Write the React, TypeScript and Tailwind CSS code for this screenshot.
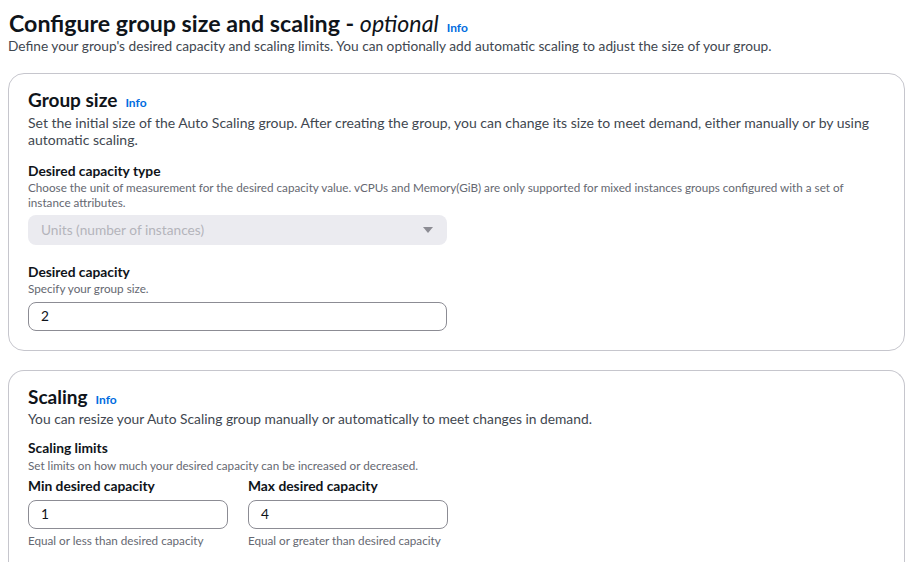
import React from "react";

const font = { fontFamily: 'Lato, "Open Sans", Arial, sans-serif' };

function Info() {
  return <span className="ml-[8px] text-[12px] font-bold leading-none text-[#006ce0]">Info</span>;
}

function TextInput({ value, width }: { value: string; width: string }) {
  return (
    <div
      className={`${width} flex h-[29px] items-center rounded-lg border border-[#8c8c94] bg-white px-[12px] text-[13.7px] text-[#0f141a]`}
    >
      {value}
    </div>
  );
}

export default function App() {
  return (
    <div className="min-h-screen bg-white px-[8px] pt-[9px] pb-6 text-[#0f141a]" style={font}>
      <h1 className="pl-[1px] text-[23.2px] font-bold leading-[28px]">
        Configure group size and scaling - <em className="font-normal italic">optional</em>
        <Info />
      </h1>
      <p className="text-[13.7px] leading-[18px] text-[#414750]">
        Define your group's desired capacity and scaling limits. You can optionally add automatic scaling to adjust the size of your group.
      </p>

      {/* Group size */}
      <section className="mt-[18px] w-[897px] rounded-2xl border border-[#c6c6cd] px-[19px] pt-[14px] pb-[19px]">
        <h2 className="text-[19px] font-bold leading-[24px]">
          Group size
          <Info />
        </h2>
        <p className="mt-[2px] text-[14px] leading-[17px] text-[#414750]">
          Set the initial size of the Auto Scaling group. After creating the group, you can change its size to meet demand, either manually or by using automatic scaling.
        </p>

        <div className="mt-[14px] text-[13.8px] font-bold leading-[18px]">Desired capacity type</div>
        <div className="pr-8 text-[11.7px] leading-[15px] text-[#656871]">
          Choose the unit of measurement for the desired capacity value. vCPUs and Memory(GiB) are only supported for mixed instances groups configured with a set of instance attributes.
        </div>
        <div className="mt-[5px] flex h-[30px] w-[419px] items-center justify-between rounded-lg bg-[#ebebf0] pl-[13px] pr-[14px] text-[13.7px] text-[#b4b4bb]">
          <span>Units (number of instances)</span>
          <svg width="10" height="7" viewBox="0 0 10 7">
            <path d="M0 0 L10 0 L5 6 Z" fill="#8c8c94" />
          </svg>
        </div>

        <div className="mt-[18px] text-[13.8px] font-bold leading-[18px]">Desired capacity</div>
        <div className="text-[11.7px] leading-[15px] text-[#656871]">Specify your group size.</div>
        <div className="mt-[6px]">
          <TextInput value="2" width="w-[419px]" />
        </div>
      </section>

      {/* Scaling */}
      <section className="mt-[19px] w-[897px] rounded-t-2xl border border-b-0 border-[#c6c6cd] px-[19px] pt-[14px] pb-[20px]">
        <h2 className="text-[19px] font-bold leading-[24px]">
          Scaling
          <Info />
        </h2>
        <p className="mt-[1px] text-[13.8px] leading-[17px] text-[#414750]">
          You can resize your Auto Scaling group manually or automatically to meet changes in demand.
        </p>
        <div className="mt-[12px] text-[13.8px] font-bold leading-[18px]">Scaling limits</div>
        <div className="mt-[1px] text-[11.7px] leading-[15px] text-[#656871]">
          Set limits on how much your desired capacity can be increased or decreased.
        </div>
        <div className="mt-[4px] flex gap-[20px]">
          <div className="flex flex-col">
            <div className="text-[13.8px] font-bold leading-[18px]">Min desired capacity</div>
            <div className="mt-[5px]">
              <TextInput value="1" width="w-[200px]" />
            </div>
            <div className="mt-[4px] text-[11.7px] leading-[15px] text-[#656871]">Equal or less than desired capacity</div>
          </div>
          <div className="flex flex-col">
            <div className="text-[13.8px] font-bold leading-[18px]">Max desired capacity</div>
            <div className="mt-[5px]">
              <TextInput value="4" width="w-[200px]" />
            </div>
            <div className="mt-[4px] text-[11.7px] leading-[15px] text-[#656871]">Equal or greater than desired capacity</div>
          </div>
        </div>
      </section>
    </div>
  );
}
